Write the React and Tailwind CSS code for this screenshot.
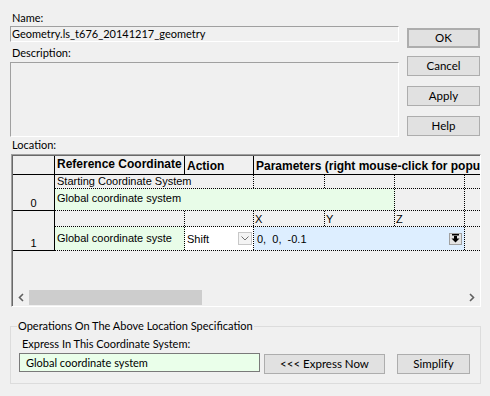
import React from 'react'

const btn = 'h-[20px] bg-[#e1e1e1] border border-[#adadad] flex items-center justify-center text-[11.5px] text-black'

function ChevronLeft() {
  return (
    <svg width="6" height="9" viewBox="0 0 6 9">
      <path d="M5 1 L1.5 4.5 L5 8" stroke="#606060" strokeWidth="1.6" fill="none" />
    </svg>
  )
}

function ChevronRight() {
  return (
    <svg width="6" height="9" viewBox="0 0 6 9">
      <path d="M1 1 L4.5 4.5 L1 8" stroke="#606060" strokeWidth="1.6" fill="none" />
    </svg>
  )
}

export default function App() {
  return (
    <div className="w-[490px] h-[396px] bg-[#f0f0f0] overflow-hidden font-['Lato','Noto_Sans',sans-serif] text-black text-[11px]">
      {/* top: name / description / buttons */}
      <div className="flex pt-[10px]">
        <div className="ml-[10px] w-[389px]">
          <div className="h-[16px] pl-[2px] leading-[16px]">Name:</div>
          <div className="h-[16px] border border-[#a0a0a0] border-r-white border-b-white pl-[1px] leading-[13px] whitespace-nowrap">
            Geometry.ls_t676_20141217_geometry
          </div>
          <div className="h-[20px] pl-[2px] pt-[3px] leading-[16px]">Description:</div>
          <div className="h-[75px] border border-[#a0a0a0] border-r-white border-b-white" />
        </div>
        <div className="ml-[8px] w-[73px] pt-[18px] flex flex-col">
          <div className={btn + ' border-2 border-[#0078d7]'}>OK</div>
          <div className={btn + ' mt-[8px]'}>Cancel</div>
          <div className={btn + ' mt-[10px]'}>Apply</div>
          <div className={btn + ' mt-[10px]'}>Help</div>
        </div>
      </div>

      {/* location grid */}
      <div className="h-[17px] pl-[12px] leading-[16px]">Location:</div>
      <div className="ml-[11px] w-[470px] h-[153px] border border-[#a0a0a0] border-r-white border-b-white flex flex-col font-['Liberation_Sans',Arial,sans-serif] text-[11px]">
        <div className="flex-1 flex flex-col border-l border-t border-[#696969] overflow-hidden">
          {/* header */}
          <div className="flex h-[19px] border-b border-black font-bold text-[12px] shrink-0">
            <div className="w-[42px] border-r border-black" />
            <div className="w-[130px] border-r border-black pl-[2px] pt-[1px] leading-[15px] overflow-hidden">
              Reference Coordinate System
            </div>
            <div className="w-[69px] border-r border-black pl-[2px] pt-[3px] leading-[14px]">Action</div>
            <div className="flex-1 pl-[2px] pt-[3px] leading-[14px] whitespace-nowrap overflow-hidden">
              Parameters (right mouse-click for popup menu)
            </div>
          </div>

          {/* row 0 */}
          <div className="flex shrink-0">
            <div className="w-[42px] h-[36px] border-r border-b border-black flex items-end justify-center pb-[1px] leading-[12px]">0</div>
            <div className="flex-1 flex flex-col">
              <div className="flex h-[14px] border-b border-dotted border-black leading-[13px]">
                <div className="w-[199px] border-r border-dotted border-black pl-[2px] whitespace-nowrap">Starting Coordinate System</div>
                <div className="w-[71px] border-r border-dotted border-black" />
                <div className="w-[70px] border-r border-dotted border-black" />
                <div className="w-[70px] border-r border-dotted border-black" />
                <div className="flex-1" />
              </div>
              <div className="flex h-[22px] border-b border-dotted border-black">
                <div className="w-[340px] bg-[#e8fce8] border-r border-dotted border-black pl-[2px] leading-[19px]">Global coordinate system</div>
                <div className="w-[70px] border-r border-dotted border-black" />
                <div className="flex-1" />
              </div>
            </div>
          </div>

          {/* row 1 */}
          <div className="flex shrink-0">
            <div className="w-[42px] h-[40px] border-r border-b border-black flex items-end justify-center pb-[1px] leading-[12px]">1</div>
            <div className="flex-1 flex flex-col">
              <div className="flex h-[16px] border-b border-dotted border-black leading-[16px]">
                <div className="w-[130px] border-r border-dotted border-black" />
                <div className="w-[69px] border-r border-dotted border-black" />
                <div className="w-[71px] border-r border-dotted border-black pl-[1px]">X</div>
                <div className="w-[70px] border-r border-dotted border-black pl-[1px]">Y</div>
                <div className="w-[70px] border-r border-dotted border-black pl-[1px]">Z</div>
                <div className="flex-1" />
              </div>
              <div className="flex h-[24px] border-b border-dotted border-black leading-[22px]">
                <div className="w-[130px] bg-[#e8fce8] border-r border-dotted border-black pl-[2px] whitespace-nowrap overflow-hidden">Global coordinate syste</div>
                <div className="w-[69px] bg-white border-r border-dotted border-black pl-[2px] flex items-center justify-between pr-[1px]">
                  <span>Shift</span>
                  <div className="w-[14px] h-[13px] border border-[#c8c8c8] bg-[#f4f4f4] flex items-center justify-center">
                    <svg width="8" height="5" viewBox="0 0 8 5">
                      <path d="M0.5 0.5 L4 4 L7.5 0.5" stroke="#707070" strokeWidth="1" fill="none" />
                    </svg>
                  </div>
                </div>
                <div className="w-[211px] bg-[#ddeeff] border-r border-dotted border-black pl-[3px] flex items-center justify-between pr-[2px]">
                  <span className="whitespace-pre">0,  0,  -0.1</span>
                  <div className="w-[13px] h-[12px] border border-[#a0a0a0] bg-[#e4e4e4] flex items-center justify-center">
                    <svg width="9" height="9" viewBox="0 0 9 9">
                      <rect x="1" y="0" width="7" height="1.5" fill="#000" />
                      <rect x="3" y="2" width="3" height="3" fill="#000" />
                      <path d="M0.5 4.5 L8.5 4.5 L4.5 8.5 Z" fill="#000" />
                    </svg>
                  </div>
                </div>
                <div className="flex-1" />
              </div>
            </div>
          </div>

          <div className="flex-1" />

          {/* horizontal scrollbar */}
          <div className="h-[17px] flex items-stretch shrink-0">
            <div className="w-[16px] flex items-center justify-center"><ChevronLeft /></div>
            <div className="flex-1 flex items-center">
              <div className="w-[173px] h-[15px] bg-[#cdcdcd]" />
            </div>
            <div className="w-[16px] flex items-center justify-center"><ChevronRight /></div>
          </div>
        </div>
      </div>

      {/* operations group */}
      <fieldset className="mx-[10px] mt-[11px] w-[471px] h-[66px] border border-[#dcdcdc]">
        <legend className="ml-[6px] px-[1px] leading-[16px]">Operations On The Above Location Specification</legend>
        <div className="pl-[11px] pt-[2px] leading-[16px]">Express In This Coordinate System:</div>
        <div className="flex items-start mt-[1px]">
          <div className="ml-[8px] w-[241px] h-[19px] border border-[#7a7a7a] bg-[#eaffea] pl-[6px] leading-[17px]">
            Global coordinate system
          </div>
          <div className={btn + ' ml-[4px] w-[121px] h-[18px] mt-[1px]'}>&lt;&lt;&lt; Express Now</div>
          <div className={btn + ' ml-[12px] w-[73px] h-[18px] mt-[1px]'}>Simplify</div>
        </div>
      </fieldset>
    </div>
  )
}
